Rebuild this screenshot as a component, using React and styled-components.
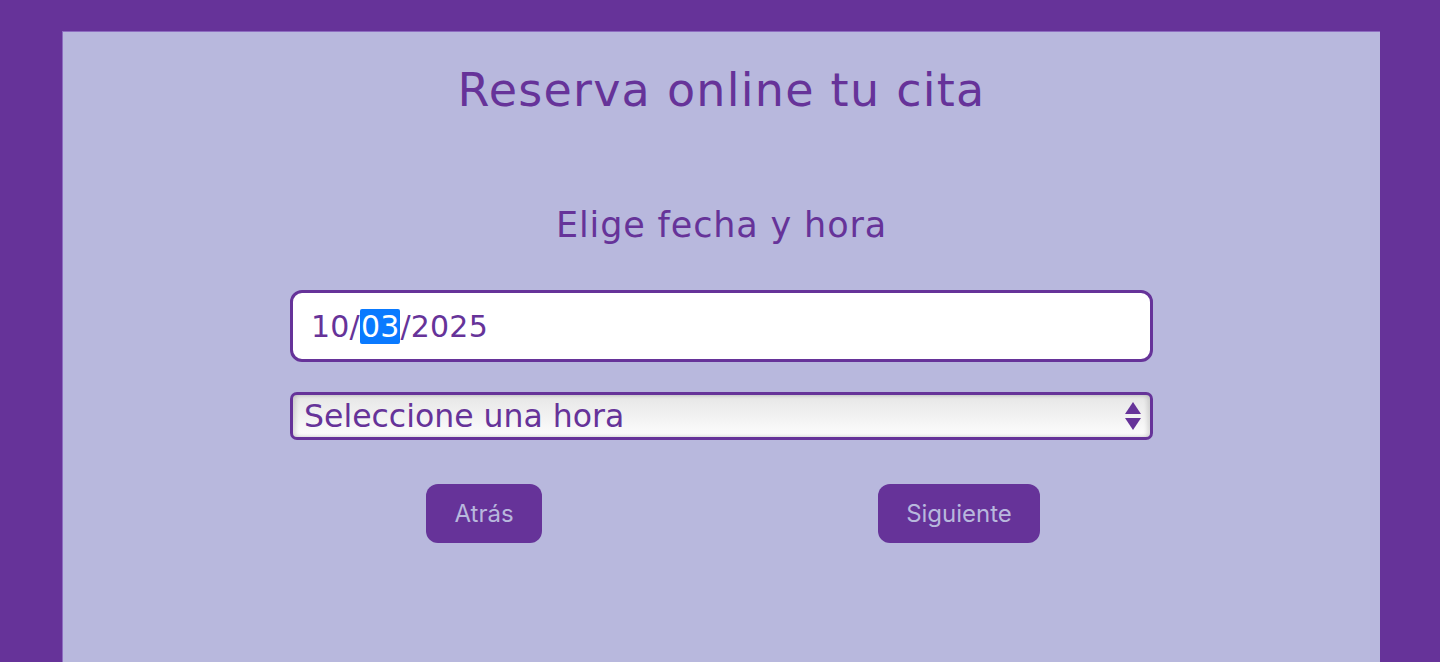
import React from "react";
import styled, { createGlobalStyle } from "styled-components";

const Global = createGlobalStyle`
  html, body { margin: 0; padding: 0; background: #663399; overflow: hidden; }
  body { font-family: "Open Sans", sans-serif; }
`;

const Page = styled.div`
  padding: 31px 60px 0 62px;
  height: 662px;
  box-sizing: border-box;
  display: flex;
`;

const Panel = styled.main`
  flex: 1;
  background: #b8b8dd;
  border-left: 1px solid #8d6cc0;
  border-top: 1px solid #8d6cc0;
  display: flex;
  flex-direction: column;
  align-items: center;
`;

const Title = styled.h1`
  margin: 30px 0 0;
  font-family: "DejaVu Sans", sans-serif;
  font-weight: 400;
  font-size: 46px;
  line-height: 56px;
  color: #663399;
  letter-spacing: 1.25px;
`;

const Subtitle = styled.h2`
  margin: 85px 0 0;
  font-family: "DejaVu Sans", sans-serif;
  font-weight: 400;
  font-size: 35px;
  line-height: 44px;
  color: #663399;
  letter-spacing: 0.85px;
`;

const Form = styled.form`
  width: 863px;
  margin-top: 43px;
  display: flex;
  flex-direction: column;
  flex-shrink: 0;
`;

const DateBox = styled.div`
  height: 72px;
  flex-shrink: 0;
  box-sizing: border-box;
  border: 3px solid #663399;
  border-radius: 12px;
  background: #fff;
  display: flex;
  align-items: center;
  padding-left: 18px;
  font-family: "DejaVu Sans", sans-serif;
  font-size: 30px;
  letter-spacing: 0.2px;
  color: #663399;
`;

const Seg = styled.span`
  background: ${(p) => (p.$active ? "#0a7aff" : "transparent")};
  color: ${(p) => (p.$active ? "#fff" : "#663399")};
  border-radius: 2px;
  padding: ${(p) => (p.$active ? "0 1px 0 1px" : "0")};
  line-height: 35px;
  display: inline-block;
`;

const SelectBox = styled.div`
  margin-top: 30px;
  height: 48px;
  flex-shrink: 0;
  box-sizing: border-box;
  border: 3px solid #663399;
  border-radius: 7px;
  background: linear-gradient(#e6e6e6, #fdfdfd);
  box-shadow: inset 3px 0 4px rgba(0,0,0,0.12), inset -3px 0 4px rgba(0,0,0,0.12);
  display: flex;
  align-items: center;
  justify-content: space-between;
  padding: 0 8px 0 11px;
  font-family: "DejaVu Sans", sans-serif;
  font-size: 31.5px;
  color: #663399;
`;

const Buttons = styled.div`
  align-self: center;
  width: 950px;
  margin-top: 44px;
  display: grid;
  grid-template-columns: 1fr 1fr;
  justify-items: center;
`;

const Button = styled.button`
  height: 59px;
  padding: 0 28px;
  border: none;
  border-radius: 12px;
  background: #663399;
  color: #b8b8dd;
  font-family: Inter, sans-serif;
  font-size: 24px;
  cursor: pointer;
`;

const Arrows = () => (
  <svg width="18" height="32" viewBox="0 0 18 32">
    <path d="M9 2 L17 14 H1 Z" fill="#663399" />
    <path d="M1 18 H17 L9 30 Z" fill="#663399" />
  </svg>
);

export default function App() {
  return (
    <>
      <Global />
      <Page>
        <Panel>
          <Title>Reserva online tu cita</Title>
          <Subtitle>Elige fecha y hora</Subtitle>
          <Form onSubmit={(e) => e.preventDefault()}>
            <DateBox>
              <Seg>10</Seg>/<Seg $active>03</Seg>/<Seg>2025</Seg>
            </DateBox>
            <SelectBox>
              <span>Seleccione una hora</span>
              <Arrows />
            </SelectBox>
            <Buttons>
              <Button type="button">Atrás</Button>
              <Button type="submit">Siguiente</Button>
            </Buttons>
          </Form>
        </Panel>
      </Page>
    </>
  );
}
